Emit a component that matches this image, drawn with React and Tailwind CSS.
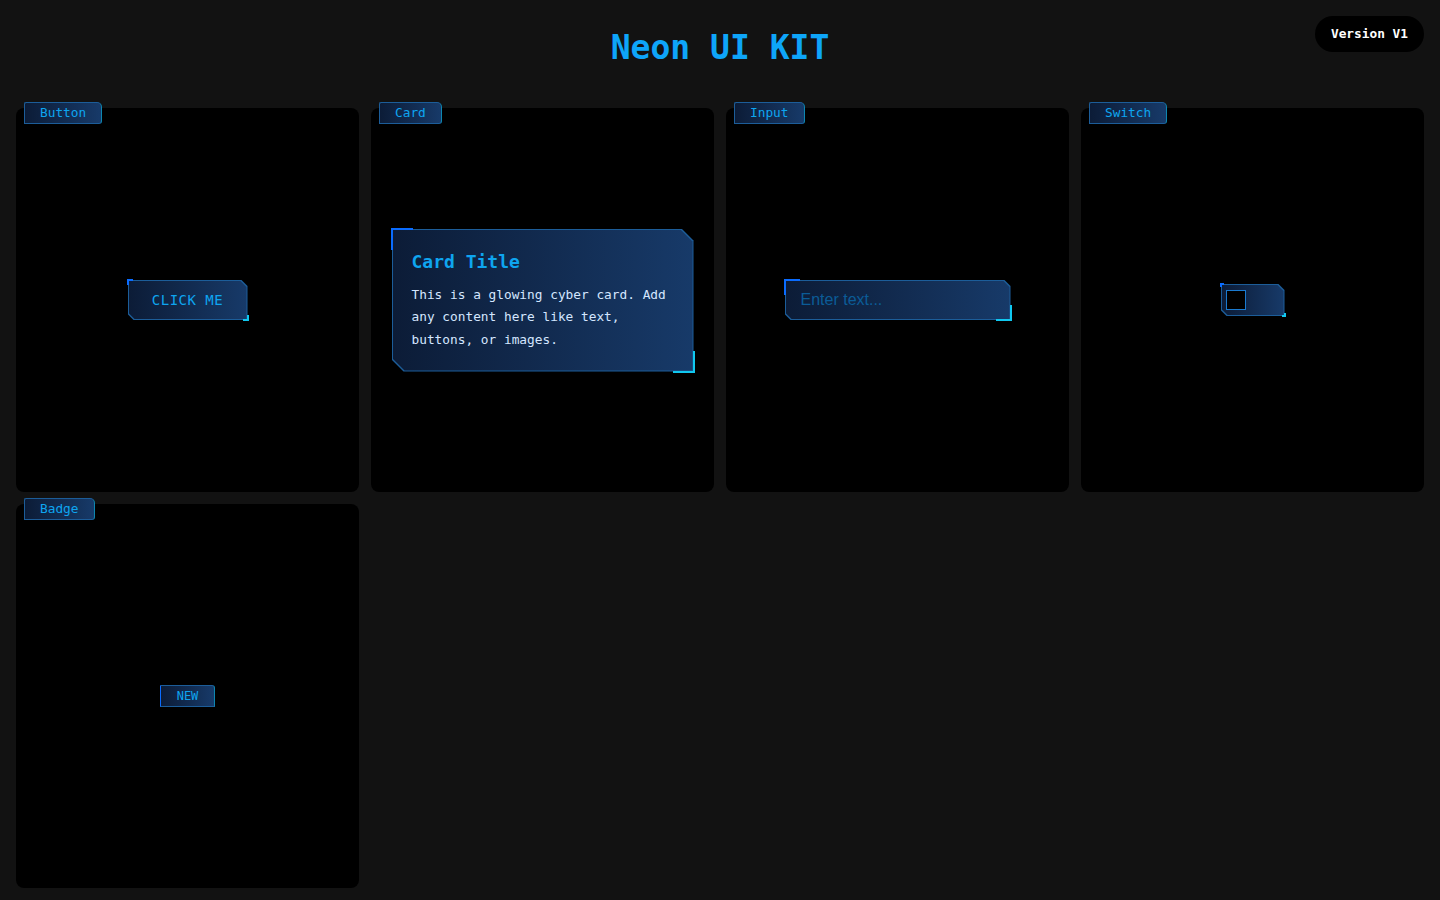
import React from 'react';

// ─── Shared bits ──────────────────────────────────────────────────
const mono = { fontFamily: '"DejaVu Sans Mono", "Liberation Mono", monospace' };

const CUT_SM = '[clip-path:polygon(0_0,calc(100%-6px)_0,100%_6px,100%_100%,6px_100%,0_calc(100%-6px))]';

// Cut-corner frame: outer layer paints the border, inner layer the fill
const Frame = ({ cut = 'sm', className = '', innerClassName = '', accent = 6, children }) => {
  const clip = cut === 'lg'
    ? '[clip-path:polygon(0_0,calc(100%-12px)_0,100%_12px,100%_100%,12px_100%,0_calc(100%-12px))]'
    : CUT_SM;
  return (
    <div className={`relative ${className}`}>
      <div className={`absolute inset-0 bg-[#1c5d99] ${clip}`} />
      <div className={`absolute inset-px bg-gradient-to-r from-[#0c1c37] to-[#173a69] ${clip}`} />
      {/* corner accents */}
      <div className="absolute -left-px -top-px border-l-2 border-t-2 border-[#0a6cff]"
           style={{ width: accent, height: accent }} />
      <div className="absolute -right-px -bottom-px border-r-2 border-b-2 border-[#10c8f0]"
           style={{ width: accent, height: accent }} />
      <div className={`relative h-full ${innerClassName}`}>{children}</div>
    </div>
  );
};

// ─── Panel with tab label ─────────────────────────────────────────
const Panel = ({ label, children }) => (
  <div className="relative h-[384px] bg-black rounded-lg flex items-center justify-center">
    <div
      style={mono}
      className="absolute left-2 -top-1.5 h-[22px] px-[15px] flex items-center text-[12.8px] text-[#0ea5f0]
                 bg-gradient-to-r from-[#0c1c37] to-[#173a69] border border-[#1c5d99] border-r-[#0d86b0]
                 rounded-tl-[2px] rounded-tr-[5px] rounded-br-[3px]"
    >
      {label}
    </div>
    {children}
  </div>
);

export default function App() {
  return (
    <div className="min-h-screen bg-[#121212] relative" style={mono}>

      {/* Version pill */}
      <div className="absolute right-4 top-4 h-9 px-4 flex items-center rounded-full bg-black text-white text-[12.8px] font-bold">
        Version V1
      </div>

      {/* Header */}
      <div className="h-[96px] flex items-center justify-center">
        <h1 className="text-[33px] font-bold text-[#0ea5f9]">Neon UI KIT</h1>
      </div>

      {/* Grid */}
      <div className="grid grid-cols-4 gap-3 px-4 pt-3 pb-3">
        <Panel label="Button">
          <Frame className="w-[120px] h-10" innerClassName="flex items-center justify-center">
            <span className="text-sm text-[#0ea5f0] tracking-[0.5px]">CLICK ME</span>
          </Frame>
        </Panel>

        <Panel label="Card">
          <Frame cut="lg" accent={22} className="w-[302px] h-[143px]" innerClassName="px-5 pt-[21px]">
            <div className="text-lg font-bold text-[#0ea5f0] leading-6">Card Title</div>
            <p className="mt-[10px] text-[12.8px] leading-[22.5px] text-[#d4e6ff]">
              This is a glowing cyber card. Add any content here like text, buttons, or images.
            </p>
          </Frame>
        </Panel>

        <Panel label="Input">
          <Frame className="w-[226px] h-10" accent={16} innerClassName="flex items-center px-4">
            <span className="text-base text-[#0b5c97]" style={{ fontFamily: '"Liberation Sans", Arial, sans-serif' }}>
              Enter text...
            </span>
          </Frame>
        </Panel>

        <Panel label="Switch">
          <Frame className="w-16 h-8" accent={4} innerClassName="flex items-center pl-[5px]">
            <div className="w-5 h-5 bg-black border border-[#1a7ad0]" />
          </Frame>
        </Panel>

        <Panel label="Badge">
          <div className="relative w-[55px] h-[22px] flex items-center justify-center text-xs text-[#0ea5f0]
                          bg-gradient-to-r from-[#0c1c37] to-[#173a69] border border-[#1c5d99] border-l-[#0a6cff] border-r-[#0d86b0]
                          rounded-tr-[3px]">
            NEW
          </div>
        </Panel>
      </div>
    </div>
  );
}
